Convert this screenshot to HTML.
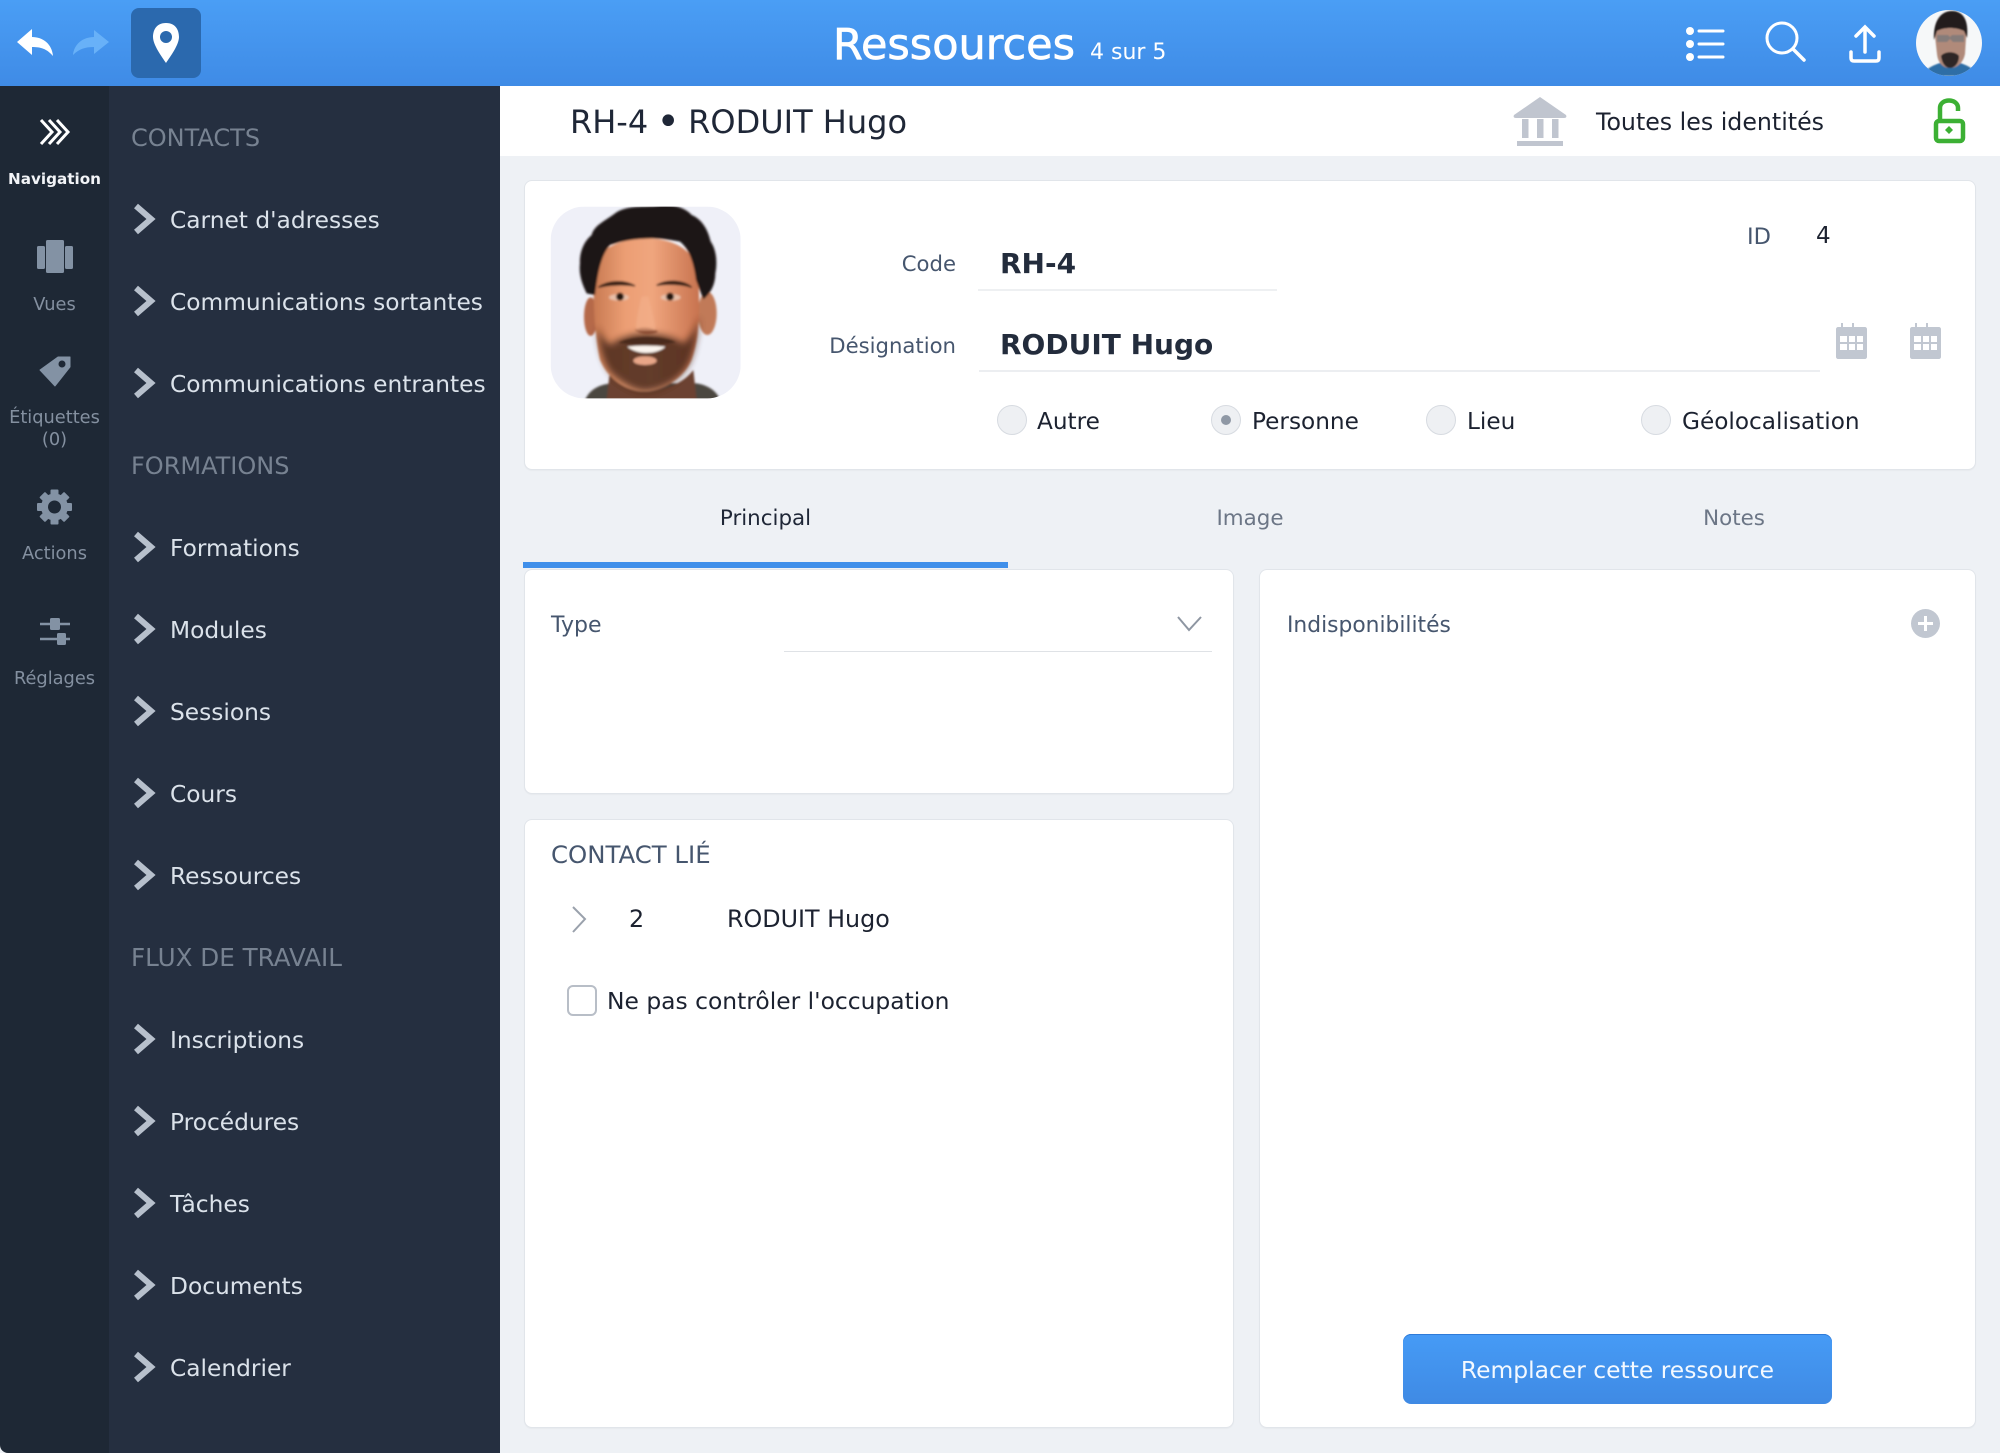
<!DOCTYPE html>
<html lang="fr"><head><meta charset="utf-8"><title>Ressources</title>
<style>
html,body{margin:0;padding:0;width:2000px;height:1453px;overflow:hidden;background:#eef1f5}
body{position:relative;font-family:"DejaVu Sans","Liberation Sans",sans-serif}
.t{position:absolute;white-space:nowrap;height:40px;line-height:40px}
.b{position:absolute}
.card{position:absolute;background:#fff;border:1px solid #e1e5ea;border-radius:8px;box-sizing:border-box;box-shadow:0 1px 1px rgba(0,0,0,.03)}
.n{left:170px;font-size:23.3px;color:#dbe2ea}
.h{left:131px;font-size:24px;color:#778291}
.r{width:109px;left:0;text-align:center;font-size:17.8px;color:#8490a0}
.l{font-size:21.2px;color:#46566e}
.d{font-size:23.2px;color:#1c2230}
.rad{position:absolute;top:405px;width:30px;height:30px;border-radius:50%;background:#eef0f3;border:1.5px solid #d7dbe1;box-sizing:border-box}
svg{position:absolute;overflow:visible}
</style></head><body>

<div class="b" style="left:0;top:0;width:2000px;height:86px;background:linear-gradient(#4a9ef5,#3f8be6)"></div>
<div class="b" style="left:0;top:86px;width:109px;height:1367px;background:#1e2835;border-bottom-left-radius:8px"></div>
<div class="b" style="left:109px;top:86px;width:391px;height:1367px;background:#252f40"></div>
<div class="b" style="left:500px;top:86px;width:1500px;height:70px;background:#fff"></div>

<svg style="left:0;top:0" width="220" height="86">
<path d="M17 42 L32 29 L32 37 C43 37 52 44 53 56 C47 49 41 47 32 47 L32 55Z" fill="#fff"/>
<path d="M109 42 L94 30 L94 37 C83 37 74 44 73 55 C79 49 85 47 94 47 L94 54Z" fill="#68b1f8"/>
<rect x="131" y="8" width="70" height="70" rx="8" fill="#2b69ae"/>
<path d="M166 23 C155 23 153 32 153 37 C153 45 162 57 166 63 C170 57 179 45 179 37 C179 32 177 23 166 23Z" fill="#fff"/>
<circle cx="166" cy="37" r="6" fill="#2b69ae"/>
</svg>

<div class="t" style="left:833px;top:25px;font-size:43px;color:#fff;-webkit-text-stroke:.7px #fff">Ressources</div>
<div class="t" style="left:1090px;top:33px;font-size:22px;color:#fff">4 sur 5</div>

<svg style="left:1680px;top:0" width="320" height="86" fill="none" stroke="#fff" stroke-linecap="round">
<g fill="#fff" stroke="none"><circle cx="10" cy="31" r="4"/><circle cx="10" cy="44" r="4"/><circle cx="10" cy="57" r="4"/></g>
<path d="M19 31H43M19 44H43M19 57H43" stroke-width="3"/>
<circle cx="102" cy="38" r="15" stroke-width="3"/><path d="M113 49L124 60" stroke-width="3.5"/>
<path d="M185 52V28M176 36L185 27L194 36" stroke-width="3.5"/>
<path d="M171 52V58C171 60 172 61 174 61H196C198 61 199 60 199 58V52" stroke-width="3.5"/>
</svg>

<svg style="left:1916px;top:10px" width="66" height="66" viewBox="0 0 66 66">
<defs><clipPath id="av"><circle cx="33" cy="33" r="33"/></clipPath><filter id="bl"><feGaussianBlur stdDeviation=".8"/></filter></defs>
<g clip-path="url(#av)"><rect width="66" height="66" fill="#f6f8f9"/>
<g filter="url(#bl)"><path d="M6 66C10 58 18 55 24 53H44C50 55 58 58 62 66Z" fill="#2d6ea6"/>
<path d="M19 26C19 12 26 8 36 8C46 8 51 14 50 28L49 44C47 54 40 58 34 58C28 58 22 54 21 44Z" fill="#b08a7a"/>
<path d="M18 30C17 12 24 1 36 1C47 1 53 10 51 28L48 21C40 17 28 17 21 21Z" fill="#221e1f"/>
<path d="M25 46C28 41 40 41 43 46C43 54 38 58 34 58C30 58 26 54 25 46Z" fill="#2e2625"/>
<path d="M21 25H32L34 27L36 25H48V32H37L34 29L31 32H21Z" fill="#77757b" opacity=".75"/></g></g>
</svg>

<!-- rail -->
<svg style="left:0;top:86px" width="110" height="580" fill="none">
<path d="M41 34L52 46L41 58M49 34L60 46L49 58M57 34L68 46L57 58" stroke="#fff" stroke-width="3"/>
<g fill="#8392a4"><rect x="37" y="160" width="8" height="23" rx="1.5"/><rect x="46" y="154" width="18" height="33" rx="1.5"/><rect x="65" y="160" width="8" height="23" rx="1.5"/></g>
<path d="M40 284L58 271H70V281L55 300Z" fill="#8392a4" stroke="#8392a4" stroke-width="1" stroke-linejoin="round"/>
<circle cx="62" cy="278" r="3.5" fill="#1e2835"/>
<g transform="translate(54.5 421)"><g fill="#8392a4"><rect x="-4" y="-17.5" width="8" height="35" rx="1"/><rect x="-4" y="-17.5" width="8" height="35" rx="1" transform="rotate(45)"/><rect x="-4" y="-17.5" width="8" height="35" rx="1" transform="rotate(90)"/><rect x="-4" y="-17.5" width="8" height="35" rx="1" transform="rotate(135)"/><circle r="13.5"/></g><circle r="6.5" fill="#1e2835"/></g>
<path d="M40 538H70M40 553H70" stroke="#8392a4" stroke-width="2.5"/>
<g fill="#8392a4"><rect x="50" y="532" width="10" height="12" rx="1.5"/><rect x="57" y="547" width="9" height="12" rx="1.5"/></g>
</svg>
<div class="t r" style="top:159px;color:#f2f4f7;font-weight:bold;font-size:15.2px">Navigation</div>
<div class="t r" style="top:285px">Vues</div>
<div class="t r" style="top:398px">Étiquettes</div>
<div class="t r" style="top:420px">(0)</div>
<div class="t r" style="top:534px">Actions</div>
<div class="t r" style="top:659px">Réglages</div>

<!-- nav -->
<div class="t h" style="top:118px">CONTACTS</div>
<div class="t h" style="top:446px">FORMATIONS</div>
<div class="t h" style="top:938px;font-size:24.6px">FLUX DE TRAVAIL</div>
<svg style="left:0;top:0" width="200" height="1453" fill="none" stroke="#b7c0cc" stroke-width="6">
<path d="M136 206L151 219L136 232"/><path d="M136 288L151 301L136 314"/><path d="M136 370L151 383L136 396"/>
<path d="M136 534L151 547L136 560"/><path d="M136 616L151 629L136 642"/><path d="M136 698L151 711L136 724"/><path d="M136 780L151 793L136 806"/><path d="M136 862L151 875L136 888"/>
<path d="M136 1026L151 1039L136 1052"/><path d="M136 1108L151 1121L136 1134"/><path d="M136 1190L151 1203L136 1216"/><path d="M136 1272L151 1285L136 1298"/><path d="M136 1354L151 1367L136 1380"/>
</svg>
<div class="t n" style="top:201px">Carnet d'adresses</div>
<div class="t n" style="top:283px">Communications sortantes</div>
<div class="t n" style="top:365px">Communications entrantes</div>
<div class="t n" style="top:529px">Formations</div>
<div class="t n" style="top:611px">Modules</div>
<div class="t n" style="top:693px">Sessions</div>
<div class="t n" style="top:775px">Cours</div>
<div class="t n" style="top:857px">Ressources</div>
<div class="t n" style="top:1021px">Inscriptions</div>
<div class="t n" style="top:1103px">Procédures</div>
<div class="t n" style="top:1185px">Tâches</div>
<div class="t n" style="top:1267px">Documents</div>
<div class="t n" style="top:1349px">Calendrier</div>

<!-- subheader -->
<div class="t" style="left:570px;top:102px;font-size:32px;color:#1f2737">RH-4 <span style="font-size:40px;line-height:0;vertical-align:-2px;margin:0 -2px">•</span> RODUIT Hugo</div>
<svg style="left:1500px;top:90px" width="80" height="60" fill="#c0c5cf">
<path d="M40 7L14 25C13 27 14 28 16 28H64C66 28 67 27 66 25Z"/>
<rect x="22" y="29" width="6.5" height="19"/><rect x="37" y="29" width="6.5" height="19"/><rect x="52" y="29" width="6.5" height="19"/>
<rect x="17" y="51" width="46" height="5"/>
</svg>
<div class="t" style="left:1596px;top:102px;font-size:23.7px;color:#1c2230">Toutes les identités</div>
<svg style="left:1919px;top:90px" width="60" height="60" fill="none" stroke="#3cb034" stroke-width="4.5">
<rect x="17" y="31" width="27" height="20" rx="3"/><path d="M21 31V18C21 8 39 8 39 18V21"/>
<path d="M30 36L34 40L30 44L26 40Z" fill="#3cb034" stroke="none"/>
</svg>

<!-- card 1 -->
<div class="card" style="left:524px;top:180px;width:1452px;height:290px"></div>
<svg style="left:520px;top:170px" width="400" height="310" viewBox="0 0 1200 930">
<defs><clipPath id="ph"><rect x="92" y="110" width="570" height="575" rx="100"/></clipPath><filter id="b2"><feGaussianBlur stdDeviation="3"/></filter><filter id="b3"><feGaussianBlur stdDeviation="10"/></filter>
<linearGradient id="sk" x1="0" x2="1"><stop offset="0" stop-color="#c87a52"/><stop offset=".3" stop-color="#ec9e74"/><stop offset=".55" stop-color="#f0a67e"/><stop offset="1" stop-color="#c8734f"/></linearGradient></defs>
<g clip-path="url(#ph)"><rect x="92" y="110" width="570" height="575" fill="#eff0f8"/>
<g filter="url(#b2)">
<path d="M195 690C210 655 240 645 270 640H530C560 645 590 660 600 690Z" fill="#4b4640"/>
<path d="M270 600C310 680 460 680 520 600L530 690H260Z" fill="#6c4230"/>
<ellipse cx="212" cy="440" rx="20" ry="58" fill="#b5694a"/>
<ellipse cx="562" cy="430" rx="28" ry="65" fill="#c17a58"/>
<path d="M222 300C222 240 300 205 380 205C470 205 535 250 535 320C540 420 540 500 515 570C490 630 420 665 375 665C320 665 265 630 240 570C225 500 218 400 222 300Z" fill="url(#sk)"/>
<path d="M232 470C238 540 252 578 268 603C292 632 340 664 375 664C420 664 488 630 512 570C526 530 536 480 538 440C526 480 510 505 490 520C465 500 410 490 375 490C340 490 290 505 272 525C255 515 242 495 232 470Z" fill="#3f2418" opacity=".8" filter="url(#b3)"/>
<path d="M180 280C178 250 190 215 215 195C222 165 260 150 285 130C320 105 370 112 410 108C450 102 490 108 515 135C550 150 565 185 572 215C590 240 592 280 586 310C586 345 570 372 550 388L528 330C520 270 505 235 480 215C400 198 330 205 270 225C240 260 232 320 225 375L200 370C185 340 176 310 180 280Z" fill="#1c1413"/>
<path d="M295 518C330 494 430 494 468 516C440 526 330 526 295 518Z" fill="#4a2a1e"/>
<path d="M345 480C360 470 390 470 415 485C395 495 365 495 345 480Z" fill="#8a4c30"/>
<path d="M235 352C265 330 315 330 345 348C315 342 265 344 235 352ZM410 346C440 328 490 330 515 352C490 342 440 340 410 346Z" fill="#3a2018" stroke="#3a2018" stroke-width="4"/>
<ellipse cx="297" cy="382" rx="30" ry="10" fill="#e8bfa8"/><ellipse cx="452" cy="382" rx="30" ry="10" fill="#e8bfa8"/>
<circle cx="300" cy="380" r="12" fill="#251410"/><circle cx="450" cy="380" r="12" fill="#251410"/>
<path d="M322 530C355 526 400 526 436 530C412 555 350 555 322 530Z" fill="#fbf4ee"/>
<ellipse cx="375" cy="572" rx="35" ry="13" fill="#e8a688"/>
<path d="M365 380C355 420 345 470 350 482H405C410 470 395 420 385 380Z" fill="#f4b08c" opacity=".6"/>
</g></g></svg>

<div class="t l" style="right:1044px;top:244px">Code</div>
<div class="t" style="left:1000px;top:244px;font-size:28px;font-weight:bold;color:#232c3c">RH-4</div>
<div class="b" style="left:978px;top:289px;width:299px;height:2px;background:#eef0f2"></div>
<div class="t l" style="right:1044px;top:326px">Désignation</div>
<div class="t" style="left:1000px;top:325px;font-size:28px;font-weight:bold;color:#232c3c">RODUIT Hugo</div>
<div class="b" style="left:979px;top:370px;width:841px;height:2px;background:#eceef1"></div>
<div class="t l" style="left:1747px;top:217px;font-size:22.5px">ID</div>
<div class="t d" style="left:1816px;top:216px;font-size:23px">4</div>

<svg style="left:1830px;top:322px" width="120" height="42" fill="#c1c7d1">
<path fill-rule="evenodd" d="M8 5H11V1H13V5H22V1H24V5H35C36 5 37 6 37 7V35C37 36 36 37 35 37H8C7 37 6 36 6 35V7C6 6 7 5 8 5ZM10 14V20H17V14ZM19 14V20H25V14ZM27 14V20H33V14ZM10 22V28H17V22ZM19 22V28H25V22ZM27 22V28H33V22Z"/>
<path transform="translate(74 0)" fill-rule="evenodd" d="M8 5H11V1H13V5H22V1H24V5H35C36 5 37 6 37 7V35C37 36 36 37 35 37H8C7 37 6 36 6 35V7C6 6 7 5 8 5ZM10 14V20H17V14ZM19 14V20H25V14ZM27 14V20H33V14ZM10 22V28H17V22ZM19 22V28H25V22ZM27 22V28H33V22Z"/>
</svg>

<div class="rad" style="left:997px"></div>
<div class="t d" style="left:1037px;top:402px">Autre</div>
<div class="rad" style="left:1211px"></div><div class="b" style="left:1221px;top:415px;width:10px;height:10px;border-radius:50%;background:#8f98a5"></div>
<div class="t d" style="left:1252px;top:402px">Personne</div>
<div class="rad" style="left:1426px"></div>
<div class="t d" style="left:1467px;top:402px">Lieu</div>
<div class="rad" style="left:1641px"></div>
<div class="t d" style="left:1682px;top:402px">Géolocalisation</div>

<!-- tabs -->
<div class="t" style="left:523px;width:485px;top:499px;text-align:center;font-size:21.4px;color:#1f2737">Principal</div>
<div class="t" style="left:1008px;width:484px;top:499px;text-align:center;font-size:21.4px;color:#6c7686">Image</div>
<div class="t" style="left:1492px;width:484px;top:499px;text-align:center;font-size:21.4px;color:#6c7686">Notes</div>
<div class="b" style="left:523px;top:562px;width:485px;height:6px;background:#3f8fea"></div>

<!-- type card -->
<div class="card" style="left:524px;top:569px;width:710px;height:225px"></div>
<div class="t l" style="left:551px;top:606px;font-size:22px">Type</div>
<div class="b" style="left:784px;top:651px;width:428px;height:1px;background:#dfe2e6"></div>
<svg style="left:1170px;top:610px" width="40" height="30" fill="none" stroke="#8e96a2" stroke-width="2"><path d="M8 7L19 20L31 7"/></svg>

<!-- contact card -->
<div class="card" style="left:524px;top:819px;width:710px;height:609px"></div>
<div class="t" style="left:551px;top:835px;font-size:24.4px;color:#46566e">CONTACT LIÉ</div>
<svg style="left:560px;top:900px" width="40" height="40" fill="none" stroke="#9aa1ac" stroke-width="2"><path d="M13 7L25 19L13 32"/></svg>
<div class="t d" style="left:629px;top:899px;font-size:23.8px">2</div>
<div class="t d" style="left:727px;top:899px;font-size:23.8px">RODUIT Hugo</div>
<div class="b" style="left:567px;top:985px;width:30px;height:31px;box-sizing:border-box;border:2.5px solid #b8bec7;border-radius:6px;background:#fff"></div>
<div class="t d" style="left:607px;top:981px;font-size:23.4px">Ne pas contrôler l'occupation</div>

<!-- right card -->
<div class="card" style="left:1259px;top:569px;width:717px;height:859px"></div>
<div class="t l" style="left:1287px;top:606px;font-size:21.8px">Indisponibilités</div>
<div class="b" style="left:1911px;top:609px;width:29px;height:29px;border-radius:50%;background:#c1c7d1"></div>
<div class="b" style="left:1918px;top:622px;width:15px;height:3px;background:#fff"></div>
<div class="b" style="left:1924px;top:616px;width:3px;height:15px;background:#fff"></div>
<div class="t" style="left:1403px;top:1334px;width:429px;height:70px;line-height:73px;text-align:center;border-radius:8px;background:linear-gradient(#469bf6,#3f8ae4);box-shadow:inset 0 1px 0 #2f7bd8;font-size:23.4px;color:#f4f9ff">Remplacer cette ressource</div>
</body></html>
